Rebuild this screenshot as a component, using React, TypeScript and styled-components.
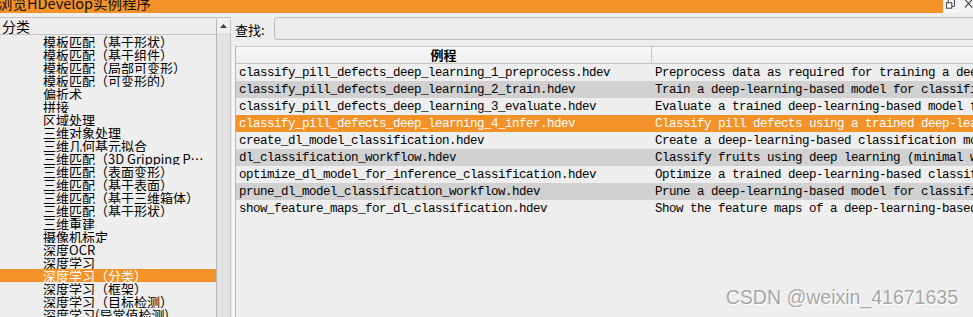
import React from "react";
import styled, { createGlobalStyle } from "styled-components";

const ORANGE = "#f39229";

const categories = [
  "模板匹配（基于形状）",
  "模板匹配（基于组件）",
  "模板匹配（局部可变形）",
  "模板匹配（可变形的）",
  "偏折术",
  "拼接",
  "区域处理",
  "三维对象处理",
  "三维几何基元拟合",
  "三维匹配（3D Gripping Point Detection）",
  "三维匹配（表面变形）",
  "三维匹配（基于表面）",
  "三维匹配（基于三维箱体）",
  "三维匹配（基于形状）",
  "三维重建",
  "摄像机标定",
  "深度OCR",
  "深度学习",
  "深度学习（分类）",
  "深度学习（框架）",
  "深度学习（目标检测）",
  "深度学习(异常值检测)",
];
const selectedCategory = 18;

const examples = [
  {
    file: "classify_pill_defects_deep_learning_1_preprocess.hdev",
    desc: "Preprocess data as required for training a deep-learning-based classifier.",
  },
  {
    file: "classify_pill_defects_deep_learning_2_train.hdev",
    desc: "Train a deep-learning-based model for classification.",
  },
  {
    file: "classify_pill_defects_deep_learning_3_evaluate.hdev",
    desc: "Evaluate a trained deep-learning-based model for classification.",
  },
  {
    file: "classify_pill_defects_deep_learning_4_infer.hdev",
    desc: "Classify pill defects using a trained deep-learning-based classifier.",
  },
  {
    file: "create_dl_model_classification.hdev",
    desc: "Create a deep-learning-based classification model.",
  },
  {
    file: "dl_classification_workflow.hdev",
    desc: "Classify fruits using deep learning (minimal workflow).",
  },
  {
    file: "optimize_dl_model_for_inference_classification.hdev",
    desc: "Optimize a trained deep-learning-based classifier for inference.",
  },
  {
    file: "prune_dl_model_classification_workflow.hdev",
    desc: "Prune a deep-learning-based model for classification.",
  },
  {
    file: "show_feature_maps_for_dl_classification.hdev",
    desc: "Show the feature maps of a deep-learning-based classifier.",
  },
];
const selectedExample = 3;

export default function App() {
  return (
    <>
      <GlobalStyle />
      <Window>
        <TitleBar>
          <TitleFill>
            <TitleText>浏览HDevelop实例程序</TitleText>
          </TitleFill>
          <WindowButtons>
            <svg width="12" height="10" viewBox="0 0 12 10">
              <rect x="1.5" y="2.5" width="6" height="6" fill="none" stroke="#333" />
              <path d="M3.5 2.5 V-1 H10.5 V6.5 H7.5" fill="none" stroke="#333" />
            </svg>
            <svg width="10" height="9" viewBox="0 0 10 9">
              <path d="M1 -1 L9 8 M9 -1 L1 8" stroke="#333" strokeWidth="1.1" />
            </svg>
          </WindowButtons>
        </TitleBar>

        <Body>
          <LeftPane>
            <CategoryList>
              <ListHeader>分类</ListHeader>
              {categories.map((c, i) => (
                <CategoryItem key={c} $selected={i === selectedCategory}>
                  {c}
                </CategoryItem>
              ))}
            </CategoryList>
            <Scrollbar>
              <ScrollButton>
                <svg width="7" height="4" viewBox="0 0 7 4">
                  <path d="M0 4 L3.5 0 L7 4 Z" fill="#444" />
                </svg>
              </ScrollButton>
            </Scrollbar>
          </LeftPane>

          <RightPane>
            <SearchRow>
              <SearchLabel>查找:</SearchLabel>
              <SearchInput />
            </SearchRow>
            <Table>
              <HeaderRow>
                <HeaderCell $divider>例程</HeaderCell>
                <HeaderCell />
              </HeaderRow>
              {examples.map((e, i) => (
                <Row
                  key={e.file}
                  $alt={i % 2 === 1}
                  $selected={i === selectedExample}
                >
                  <FileCell>{e.file}</FileCell>
                  <DescCell>{e.desc}</DescCell>
                </Row>
              ))}
            </Table>
          </RightPane>
        </Body>

        <Watermark>CSDN @weixin_41671635</Watermark>
      </Window>
    </>
  );
}

const GlobalStyle = createGlobalStyle`
  html, body {
    margin: 0;
    padding: 0;
    background: #eeeeee;
  }
  body {
    font-family: "Noto Sans CJK SC", "DejaVu Sans", sans-serif;
  }
`;

const Window = styled.div`
  position: relative;
  width: 973px;
  height: 317px;
  overflow: hidden;
  background: #eeeeee;
  display: flex;
  flex-direction: column;
`;

const TitleBar = styled.div`
  display: flex;
  height: 13px;
  flex-shrink: 0;
`;

const TitleFill = styled.div`
  flex: 1;
  background: ${ORANGE};
  overflow: hidden;
`;

const TitleText = styled.div`
  margin: -6px 0 0 -2px;
  font-size: 14.5px;
  line-height: 17px;
  color: #111;
  white-space: nowrap;
`;

const WindowButtons = styled.div`
  width: 30px;
  background: #f4f4f4;
  display: flex;
  align-items: flex-start;
  gap: 8px;
  padding-left: 2px;
  box-sizing: border-box;
`;

const Body = styled.div`
  flex: 1;
  display: flex;
  padding-top: 4px;
  min-height: 0;
`;

const LeftPane = styled.div`
  width: 231px;
  flex-shrink: 0;
  display: flex;
  border-top: 1px solid #c4c4c4;
`;

const CategoryList = styled.div`
  width: 216px;
  flex-shrink: 0;
  overflow: hidden;
`;

const ListHeader = styled.div`
  height: 16px;
  line-height: 16px;
  padding-left: 2px;
  font-size: 14px;
  color: #000;
  border-bottom: 1px solid #c4c4c4;
`;

const CategoryItem = styled.div<{ $selected?: boolean }>`
  height: 13px;
  line-height: 13px;
  padding: 0 5px 0 43px;
  font-size: 13px;
  white-space: nowrap;
  overflow: hidden;
  text-overflow: ellipsis;
  background: ${(p) => (p.$selected ? ORANGE : "transparent")};
  color: ${(p) => (p.$selected ? "#fff" : "#000")};
`;

const Scrollbar = styled.div`
  width: 15px;
  box-sizing: border-box;
  margin-top: 1px;
  background: #e2e2e2;
  border-left: 1px solid #b8b8b8;
  border-right: 1px solid #c2c2c2;
`;

const ScrollButton = styled.div`
  height: 14px;
  background: #f0f0f0;
  display: flex;
  align-items: center;
  justify-content: center;
`;

const RightPane = styled.div`
  flex: 1;
  display: flex;
  flex-direction: column;
  padding-left: 4px;
  min-width: 0;
`;

const SearchRow = styled.div`
  display: flex;
  align-items: center;
  height: 23px;
`;

const SearchLabel = styled.span`
  width: 39px;
  flex-shrink: 0;
  font-size: 13px;
  color: #000;
  padding-top: 2px;
`;

const SearchInput = styled.div`
  flex: 1;
  height: 23px;
  box-sizing: border-box;
  margin-right: -10px;
  border: 1px solid #bdbdbd;
  border-radius: 3px;
  background: #ececec;
`;

const Table = styled.div`
  flex: 1;
  margin-top: 6px;
  width: 1200px;
  border-left: 1px solid #b4b4b4;
  box-shadow: -3px 0 0 #f7f7f7;
`;

const HeaderRow = styled.div`
  display: grid;
  grid-template-columns: 416px 1fr;
  height: 18px;
  box-sizing: border-box;
  border-top: 1px solid #c6c6c6;
  border-bottom: 1px solid #c6c6c6;
  background: linear-gradient(#f8f8f8, #eeeeee);
`;

const HeaderCell = styled.div<{ $divider?: boolean }>`
  text-align: center;
  font-size: 13px;
  font-weight: bold;
  line-height: 16px;
  color: #000;
  border-right: ${(p) => (p.$divider ? "1px solid #c6c6c6" : "none")};
`;

const Row = styled.div<{ $alt?: boolean; $selected?: boolean }>`
  display: grid;
  grid-template-columns: 416px 1fr;
  height: 17px;
  align-items: center;
  background: ${(p) => (p.$selected ? ORANGE : p.$alt ? "#d1d1d1" : "#eeeeee")};
  color: ${(p) => (p.$selected ? "#fff" : "#000")};
  font-family: "Liberation Mono", "DejaVu Sans Mono", monospace;
  font-size: 12.5px;
  letter-spacing: -0.5px;
`;

const FileCell = styled.div`
  padding-left: 3px;
  white-space: nowrap;
  overflow: hidden;
`;

const DescCell = styled.div`
  padding-left: 3px;
  white-space: nowrap;
  overflow: hidden;
`;

const Watermark = styled.div`
  position: absolute;
  right: 15px;
  bottom: 8px;
  font-family: "Liberation Sans", Arial, sans-serif;
  font-size: 19.5px;
  color: #a6a6a6;
  text-shadow: 0 0 1px #fff, 1px 1px 0 #fff;
  white-space: nowrap;
`;
